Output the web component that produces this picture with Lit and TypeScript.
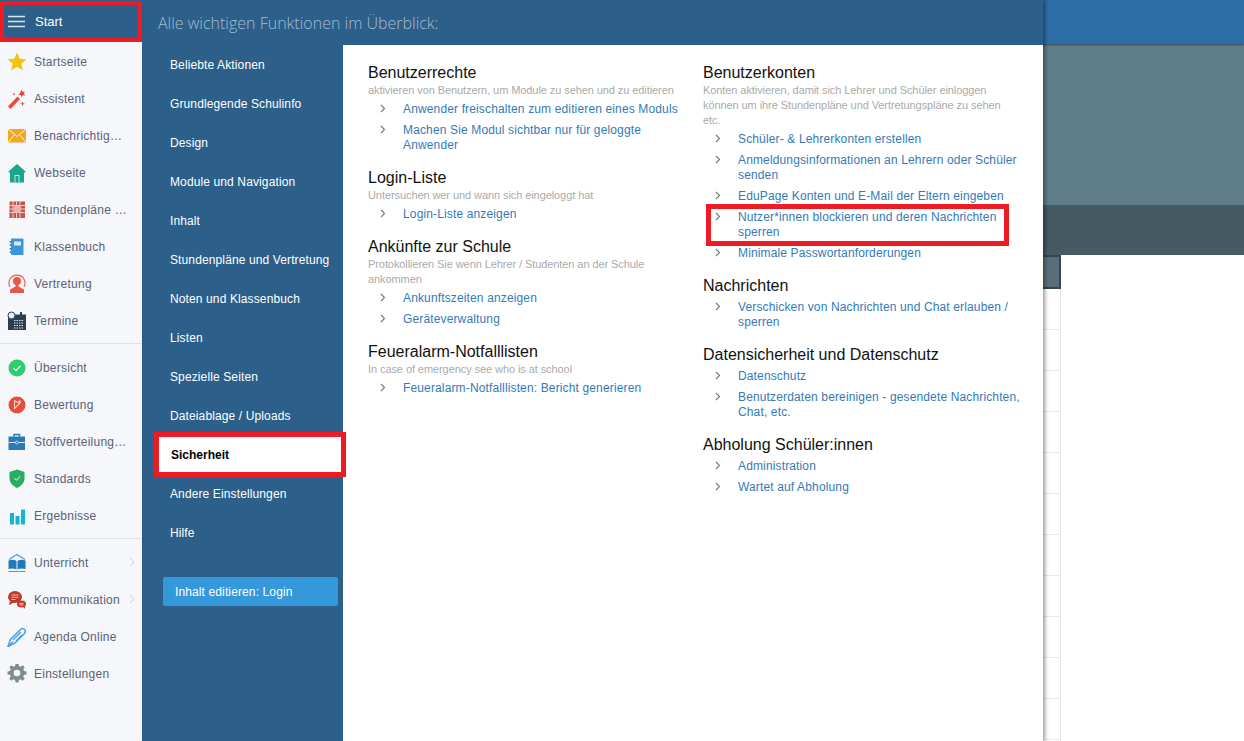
import { LitElement, html, css, svg } from "lit";
import { customElement } from "lit/decorators.js";

const icons: Record<string, any> = {
  star: svg`<polygon fill="#f4c20d" points="10,.5 12.7,6.7 19.4,7.300 14.3,11.700 15.9,18.300 10,14.800 4.100,18.300 5.700,11.700 .6,7.300 7.300,6.700"/>`,
  wand: svg`<path d="M1 17.500 L10.500 7.500 L13 10 L3.500 20 Z" fill="#e8483c"/><path d="M14.500 .5l1 2.200 2.300-.3-1 2.200 1.400 1.800-2.400-.1-1.200 2-1-2.200-2.300-.4 1.700-1.600z" fill="#e8483c"/><path d="M15.500 12.500l.8 1.700 1.700.5-1.700.6-.8 1.700-.7-1.700-1.700-.6 1.700-.5z" fill="#e8483c"/><path d="M7 3.500l.5 1.200 1.200.4-1.200.4-.5 1.200-.5-1.200-1.200-.4 1.200-.4z" fill="#e8483c"/>`,
  mail: svg`<rect x="1" y="3" width="18" height="13.500" fill="#f5a623"/><path d="M1 3l9 7.500L19 3M1 16.500l6.500-8M19 16.500l-6.500-8" fill="none" stroke="#fff" stroke-width=".9"/>`,
  home: svg`<path d="M10 1L1.500 8.500v1H3v10h14v-10h1.500v-1z" fill="#1ba689"/><rect x="7.500" y="12" width="5" height="7.500" fill="#bfe6dc"/><rect x="8.500" y="13" width="3" height="6.500" fill="#1ba689"/>`,
  grid: svg`<rect x="2.500" y="1.500" width="15.500" height="16.500" fill="#c9524a"/><path d="M2.500 5.500h15.500M2.500 9h15.500M2.500 12.500h15.500M6 1.500v16.500M9.500 1.500v16.500M13 1.500v16.500" stroke="#f0cdc8" stroke-width="1"/><rect x="7" y="6" width="7" height="6.500" fill="#e9b3ad"/>`,
  book2: svg`<rect x="4" y="1.500" width="12.500" height="16.500" rx="1" fill="#3a97dc"/><rect x="7" y="4.500" width="7" height="4" fill="#d5e9f7"/><path d="M3.500 4v1.500M3.500 7.500v1.500M3.500 11v1.500M3.500 14.500v1.500" stroke="#1e6fa8" stroke-width="1.500"/>`,
  user: svg`<path d="M3 13a8 8 0 1 1 14 0" fill="none" stroke="#e8584a" stroke-width="1.100"/><circle cx="10" cy="7" r="4" fill="#e8584a"/><path d="M8.500 10v2.500L3 15.500V19h14v-3.500l-5.500-3V10z" fill="#e8584a"/>`,
  cal: svg`<rect x="1" y="3.500" width="18" height="15.500" fill="#2c3e50"/><rect x="13" y="1" width="2" height="4" fill="#2c3e50"/><path d="M7 9.500h9.500M7 12h9.500M7 14.500h9.500M7 17h9.500" stroke="#dfe6ec" stroke-width="1.100" stroke-dasharray="1.500 1"/><circle cx="4.500" cy="4.500" r="3.500" fill="#e8ecef" stroke="#2c3e50"/>`,
  check: svg`<circle cx="10" cy="10" r="8.500" fill="#2ecc71"/><path d="M6.500 10.200l2.500 2.500 4.500-5" fill="none" stroke="#fff" stroke-width="1.100"/>`,
  grade: svg`<circle cx="10" cy="10" r="8.500" fill="#e74c3c"/><path d="M7.500 5.500v8l5-5-5-3M11.500 6l2 2M13.500 5.500l-1 1" fill="none" stroke="#f7d4d0" stroke-width="1.100"/>`,
  case: svg`<rect x="1.500" y="4.500" width="16.500" height="13.500" fill="#2a7ab8"/><path d="M7 4.500V2.500h5.500v2" fill="none" stroke="#2a7ab8" stroke-width="1.500"/><path d="M1.500 10.500h16.500" stroke="#dcebf6" stroke-width="1"/><circle cx="9.700" cy="10.500" r="1.400" fill="#2a7ab8" stroke="#dcebf6" stroke-width=".8"/>`,
  shield: svg`<path d="M10 .5l7.500 2.500V9.500c0 4.500-3.500 7.500-7.500 9.500C6 17 2.500 14 2.500 9.500V3z" fill="#27ae60"/><path d="M7.500 9.300l2 2 3.500-4" fill="none" stroke="#fff" stroke-width="1"/>`,
  bars: svg`<rect x="3" y="7" width="4" height="11.500" fill="#14b5d0"/><rect x="8.500" y="10" width="4" height="8.500" fill="#14b5d0"/><rect x="14" y="3.500" width="4" height="15" fill="#14b5d0"/>`,
  learn: svg`<path d="M2 6.500l8-5 8 5" fill="none" stroke="#4a9bd4" stroke-width="1.200"/><path d="M1.500 7.500c3-1 6-.8 8 .5v8.500c-2-1.200-5-1.400-8-.5zM18.500 7.500c-3-1-6-.8-8 .5v8.500c2-1.200 5-1.400 8-.5z" fill="#1f7ab8"/><path d="M1.500 18.500h17" stroke="#4a9bd4" stroke-width="1"/>`,
  chat: svg`<ellipse cx="8" cy="7" rx="7" ry="6" fill="#c0392b"/><path d="M3 11l-1 4 5-2.500z" fill="#c0392b"/><ellipse cx="14.500" cy="14" rx="4.500" ry="3.500" fill="#c0392b"/><path d="M16 16.500l2 2.500v-4z" fill="#c0392b"/><path d="M4.500 5h7M4.500 7.300h7M4.500 9.500h4M12.500 13.500h4M12.500 15h4" stroke="#f3d2ce" stroke-width=".9"/>`,
  pen: svg`<path d="M1 19.500l2.500-7L14 2c1.500-1 3-.5 4 1 .5 1 .5 2-.5 3.500L8 16z" fill="none" stroke="#4d9fdc" stroke-width="1.500"/><path d="M6 13l8-8M9 14l6-6M1 19.500l5-5" fill="none" stroke="#4d9fdc" stroke-width="1.300"/>`,
  gear: svg`<path fill="#7f8c8d" fill-rule="evenodd" transform="translate(.5 -1.500) scale(.95)" d="M8.500 1h3l.5 2.600 1.800.8L16 2.900l2.100 2.100-1.500 2.200.8 1.800 2.600.5v3l-2.600.5-.8 1.800 1.500 2.200-2.100 2.100-2.200-1.500-1.800.8-.5 2.600h-3L8 18.400l-1.800-.8L4 19.100 1.900 17l1.500-2.200-.8-1.800L0 12.500v-3l2.600-.5.800-1.800L1.900 5 4 2.900l2.200 1.500L8 3.600zM10 7.500a3.500 3.500 0 1 0 0 7 3.500 3.500 0 0 0 0-7z"/>`,
};

const navGroups = [
  [["star","Startseite"],["wand","Assistent"],["mail","Benachrichtig…"],["home","Webseite"],["grid","Stundenpläne …"],["book2","Klassenbuch"],["user","Vertretung"],["cal","Termine"]],
  [["check","Übersicht"],["grade","Bewertung"],["case","Stoffverteilung…"],["shield","Standards"],["bars","Ergebnisse"]],
  [["learn","Unterricht",1],["chat","Kommunikation",1],["pen","Agenda Online"],["gear","Einstellungen"]],
];

const cats = ["Beliebte Aktionen","Grundlegende Schulinfo","Design","Module und Navigation","Inhalt","Stundenpläne und Vertretung","Noten und Klassenbuch","Listen","Spezielle Seiten","Dateiablage / Uploads","Sicherheit","Andere Einstellungen","Hilfe"];

type Sec = { t: string; s?: string; l: string[]; mark?: number };
const left: Sec[] = [
  { t: "Benutzerrechte", s: "aktivieren von Benutzern, um Module zu sehen und zu editieren", l: ["Anwender freischalten zum editieren eines Moduls","Machen Sie Modul sichtbar nur für geloggte Anwender"] },
  { t: "Login-Liste", s: "Untersuchen wer und wann sich eingeloggt hat", l: ["Login-Liste anzeigen"] },
  { t: "Ankünfte zur Schule", s: "Protokollieren Sie wenn Lehrer / Studenten an der Schule ankommen", l: ["Ankunftszeiten anzeigen","Geräteverwaltung"] },
  { t: "Feueralarm-Notfalllisten", s: "In case of emergency see who is at school", l: ["Feueralarm-Notfalllisten: Bericht generieren"] },
];
const right: Sec[] = [
  { t: "Benutzerkonten", s: "Konten aktivieren, damit sich Lehrer und Schüler einloggen können um ihre Stundenpläne und Vertretungspläne zu sehen etc.", l: ["Schüler- & Lehrerkonten erstellen","Anmeldungsinformationen an Lehrern oder Schüler senden","EduPage Konten und E-Mail der Eltern eingeben","Nutzer*innen blockieren und deren Nachrichten sperren","Minimale Passwortanforderungen"], mark: 3 },
  { t: "Nachrichten", l: ["Verschicken von Nachrichten und Chat erlauben / sperren"] },
  { t: "Datensicherheit und Datenschutz", l: ["Datenschutz","Benutzerdaten bereinigen - gesendete Nachrichten, Chat, etc."] },
  { t: "Abholung Schüler:innen", l: ["Administration","Wartet auf Abholung"] },
];

@customElement("app-root")
export class AppRoot extends LitElement {
  static styles = css`
    :host { display: flex; width: 1244px; height: 741px; overflow: hidden; font-family: "Liberation Sans", Arial, sans-serif; font-size: 12px; background: #fff; }
    *, *::before, *::after { box-sizing: border-box; }
    .side { width: 143px; flex: none; background: #f5f7fa; border-right: 1px solid #2c5f8a; }
    .start { position: relative; height: 42px; background: #2c5f8a; color: #fff; display: flex; align-items: center; padding-left: 8px; gap: 10px; font-size: 13px; }
    .start::after { content: ""; position: absolute; left: 0; top: 1px; width: 142px; height: 41px; border: 4px solid #ed1c24; }
    .burger { width: 17px; height: 13px; display: block; }
    .group { padding: 5px 0 4px; border-bottom: 1px solid #dfe2e5; }
    .group:first-child { padding-top: 1px; }
    .group:last-child { border-bottom: 0; }
    .item { height: 37px; display: flex; align-items: center; color: #5b6178; position: relative; letter-spacing: .25px; }
    .item svg { width: 20px; height: 20px; margin-left: 7px; flex: none; }
    .item span { margin-left: 7px; white-space: nowrap; }
    .item svg.arrow { position: absolute; left: 129px; top: 13px; margin: 0; width: 6px; height: 10px; }
    .panel { width: 900px; flex: none; display: flex; flex-direction: column; position: relative; box-shadow: 2px 0 4px rgba(0,0,0,.4); z-index: 2; }
    .phead { height: 45px; flex: none; background: #2c5f8a; color: #a3bdd2; font-family: "Open Sans", sans-serif; font-weight: 300; font-size: 16px; display: flex; align-items: center; padding-left: 15px; }
    .pbody { flex: 1; display: flex; min-height: 0; }
    .cats { width: 200px; flex: none; background: #2c5f8a; padding: 0 0 0 12px; letter-spacing: .12px; }
    .cat { height: 39px; display: flex; align-items: center; padding-left: 15px; color: #fff; }
    .cat.on { position: relative; color: #000; font-weight: bold; letter-spacing: 0; }
    .cat.on::before { content: ""; position: absolute; left: -1px; top: -3px; width: 192px; height: 45px; background: #fff; border: 5px solid #ed1c24; z-index: 1; }
    .cat.on span { position: relative; z-index: 2; padding-left: 1px; }
    .btn { margin: 25px 5px 0 8px; height: 29px; background: #3498db; color: #fff; border-radius: 2px; display: flex; align-items: center; padding-left: 12px; }
    .main { flex: 1; background: #fff; display: flex; padding: 18px 0 0 25px; }
    .col { width: 335px; flex: none; }
    .sec { margin-bottom: 15px; }
    h3 { margin: 0; font-size: 16px; font-weight: normal; line-height: 20px; color: #111; }
    .sub { font-size: 11px; letter-spacing: -.08px; line-height: 15px; color: #aaa; max-width: 312px; margin-bottom: 4px; }
    .nosub { height: 4px; }
    ul { list-style: none; margin: 0; padding: 0; }
    li { position: relative; padding-left: 35px; line-height: 15px; margin-bottom: 6px; color: #337ab7; max-width: 322px; letter-spacing: .14px; }
    li:last-child { margin-bottom: 0; }
    li svg { position: absolute; left: 12px; top: 2px; width: 6px; height: 9px; }
    li.mark::after { content: ""; position: absolute; left: 3px; top: -6px; width: 303px; height: 42px; border: 5px solid #ed1c24; }
    .bg { flex: 1; display: flex; flex-direction: column; min-width: 0; }
    .bar { height: 44px; flex: none; background: #2b6ea6; box-shadow: 0 1px 2px rgba(0,0,0,.45); position: relative; }
    .band1 { height: 161px; flex: none; background: #607d8b; }
    .band2 { height: 50px; flex: none; background: #455a62; }
    .thead { width: 18px; height: 34px; flex: none; background: #5a6f79; border: 2px solid #37474f; border-left: 0; }
    .rows { width: 18px; flex: 1; border-right: 1px solid #e8e8e8; display: flex; flex-direction: column; }
    .rows i { display: block; height: 41px; flex: none; border-bottom: 1px solid #e8e8e8; }
  `;

  renderSec(s: Sec) {
    return html`<div class="sec">
      <h3>${s.t}</h3>
      ${s.s ? html`<div class="sub">${s.s}</div>` : html`<div class="nosub"></div>`}
      <ul>${s.l.map((x, i) => html`<li class=${s.mark === i ? "mark" : ""}>
        <svg viewBox="0 0 6 9"><path d="M1 1l3.500 3.500L1 8" fill="none" stroke="#777" stroke-width="1.100"/></svg>${x}</li>`)}</ul>
    </div>`;
  }

  render() {
    return html`
      <aside class="side">
        <div class="start">
          <svg class="burger" viewBox="0 0 17 13"><path d="M0 1.500h17M0 6.500h17M0 11.500h17" stroke="#d6e2ec" stroke-width="1.600"/></svg>
          <span>Start</span>
        </div>
        <div class="nav">
          ${navGroups.map(g => html`<div class="group">${g.map((it: any) => html`<div class="item">
            <svg viewBox="0 0 20 20">${icons[it[0]]}</svg><span>${it[1]}</span>
            ${it[2] ? html`<svg class="arrow" viewBox="0 0 6 10"><path d="M1 1l4 4-4 4" fill="none" stroke="#ccd0d5" stroke-width="1"/></svg>` : ""}
          </div>`)}</div>`)}
        </div>
      </aside>
      <section class="panel">
        <div class="phead">Alle wichtigen Funktionen im Überblick:</div>
        <div class="pbody">
          <nav class="cats">
            ${cats.map(c => html`<div class="cat ${c === "Sicherheit" ? "on" : ""}"><span>${c}</span></div>`)}
            <div class="btn">Inhalt editieren: Login</div>
          </nav>
          <div class="main">
            <div class="col">${left.map(s => this.renderSec(s))}</div>
            <div class="col">${right.map(s => this.renderSec(s))}</div>
          </div>
        </div>
      </section>
      <div class="bg">
        <div class="bar"></div>
        <div class="band1"></div>
        <div class="band2"></div>
        <div class="thead"></div>
        <div class="rows">${Array.from({ length: 12 }, () => html`<i></i>`)}</div>
      </div>
    `;
  }
}
